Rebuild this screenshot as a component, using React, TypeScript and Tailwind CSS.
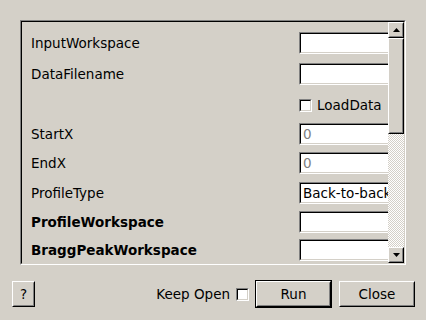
import React from "react";

const font = { fontFamily: '"DejaVu Sans", "Liberation Sans", sans-serif' };

function Sunken({ className = "", children }: { className?: string; children?: React.ReactNode }) {
  return (
    <div className={`border border-t-[#808080] border-l-[#808080] border-b-white border-r-white ${className}`}>
      <div className="w-full h-full border border-t-black border-l-black border-b-[#d4d0c8] border-r-[#d4d0c8] bg-white overflow-hidden">
        {children}
      </div>
    </div>
  );
}

function Raised({ className = "", children }: { className?: string; children?: React.ReactNode }) {
  return (
    <div className={`border border-t-white border-l-white border-b-black border-r-black bg-[#d4d0c8] ${className}`}>
      <div className="w-full h-full border border-t-[#d4d0c8] border-l-[#d4d0c8] border-b-[#808080] border-r-[#808080] flex items-center justify-center">
        {children}
      </div>
    </div>
  );
}

function Input({ value, grey }: { value?: string; grey?: boolean }) {
  return (
    <Sunken className="w-[110px] h-[22px] shrink-0">
      <div className={`h-full flex items-center pl-[2px] text-[13.5px] whitespace-nowrap ${grey ? "text-[#808080]" : "text-black"}`}>
        {value}
      </div>
    </Sunken>
  );
}

function Check({ className = "" }: { className?: string }) {
  return <Sunken className={`w-[13px] h-[13px] shrink-0 ${className}`} />;
}

function Row({ label, bold, mt, children }: { label?: string; bold?: boolean; mt: string; children: React.ReactNode }) {
  return (
    <div className={`flex items-center h-[22px] ${mt}`}>
      <div className={`w-[268px] shrink-0 text-[13.5px] text-black ${bold ? "font-bold" : ""}`}>{label}</div>
      {children}
    </div>
  );
}

export default function App() {
  return (
    <div className="w-[426px] h-[320px] bg-[#d4d0c8] pt-[20px] pl-[20px] overflow-hidden" style={font}>
      <div className="w-[386px] h-[245px] border border-t-[#808080] border-l-[#808080] border-b-white border-r-white">
        <div className="w-full h-full border border-t-black border-l-black border-b-[#d4d0c8] border-r-[#d4d0c8] flex">
          <div className="w-[366px] h-full overflow-hidden pl-[9px] pt-[10px] flex flex-col">
            <Row label="InputWorkspace" mt="mt-0"><Input /></Row>
            <Row label="DataFilename" mt="mt-[9px]"><Input /></Row>
            <Row mt="mt-[9px]">
              <div className="flex items-center">
                <Check />
                <span className="ml-[5px] text-[13.5px] text-black">LoadData</span>
              </div>
            </Row>
            <Row label="StartX" mt="mt-[7px]"><Input value="0" grey /></Row>
            <Row label="EndX" mt="mt-[7px]"><Input value="0" grey /></Row>
            <Row label="ProfileType" mt="mt-[8px]"><Input value="Back-to-back" /></Row>
            <Row label="ProfileWorkspace" bold mt="mt-[7px]"><Input /></Row>
            <Row label="BraggPeakWorkspace" bold mt="mt-[6px]"><Input /></Row>
          </div>
          <div className="w-[16px] h-full flex flex-col">
            <Raised className="w-[16px] h-[16px] shrink-0">
              <svg width="7" height="4" viewBox="0 0 7 4"><polygon points="0,4 7,4 3.5,0" fill="#000" /></svg>
            </Raised>
            <Raised className="w-[16px] h-[96px] shrink-0" />
            <div className="flex-1 bg-[repeating-conic-gradient(#ffffff_0%_25%,#d4d0c8_0%_50%)] bg-[length:2px_2px]" />
            <Raised className="w-[16px] h-[16px] shrink-0">
              <svg width="7" height="4" viewBox="0 0 7 4"><polygon points="0,0 7,0 3.5,4" fill="#000" /></svg>
            </Raised>
          </div>
        </div>
      </div>
      <div className="-ml-[20px] mt-[15px] h-[28px] flex items-center pl-[12px] pr-[11px]">
        <Raised className="w-[23px] h-[26px]">
          <span className="text-[13.5px] text-black">?</span>
        </Raised>
        <div className="flex-1" />
        <span className="text-[13.5px] text-black">Keep Open</span>
        <Check className="ml-[6px]" />
        <div className="ml-[6px] w-[77px] h-[28px] border border-black">
          <Raised className="w-full h-full">
            <span className="text-[13.5px] text-black">Run</span>
          </Raised>
        </div>
        <Raised className="ml-[7px] w-[76px] h-[26px]">
          <span className="text-[13.5px] text-black">Close</span>
        </Raised>
      </div>
    </div>
  );
}
